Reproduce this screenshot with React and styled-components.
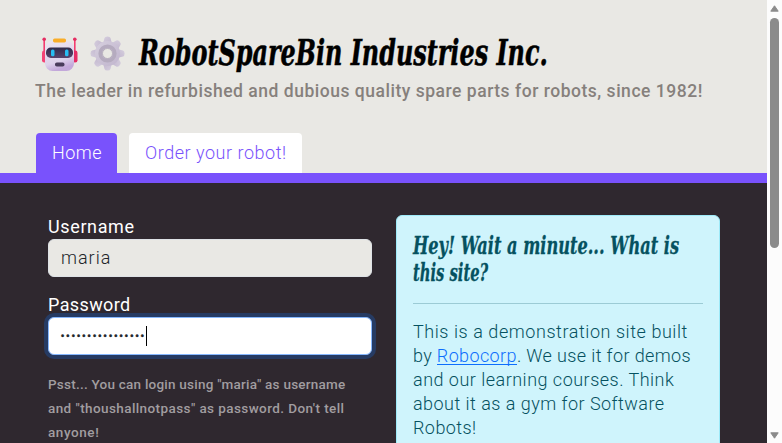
import React, { useLayoutEffect, useRef, useState } from 'react';
import styled, { createGlobalStyle } from 'styled-components';

const Global = createGlobalStyle`
  * { box-sizing: border-box; }
  html, body { margin: 0; height: 100%; overflow: hidden; }
  body { font-family: Roboto, "Liberation Sans", sans-serif; font-size: 18px; font-weight: 350; line-height: 24px; color: #fff; }
`;

const Window = styled.div`
  display: grid;
  grid-template-columns: minmax(0, 1fr) 15px;
  width: 782px;
  height: 443px;
  overflow: hidden;
`;
const Page = styled.div`
  display: flex;
  flex-direction: column;
  height: 443px;
  overflow: hidden;
  background: #2f282f;
`;
const Header = styled.header`
  display: flex;
  flex-direction: column;
  height: 183px;
  flex: none;
  padding: 32px 35px 0;
  background: #e9e8e4;
  border-bottom: 10px solid #7952fc;
`;
const Brand = styled.h1`
  display: flex;
  align-items: center;
  height: 42px;
  margin: 0;
  padding-left: 7px;
  font: italic bold 35px/42px "DejaVu Serif", "Liberation Serif", serif;
  font-stretch: condensed;
  color: #000;
  -webkit-text-stroke: 0.5px #000;
`;
const Emoji = styled.svg`
  flex: none;
  width: 36px;
  height: 36px;
  margin: 2px ${(p) => p.$gap}px 0 0;
`;
const Tagline = styled.p`
  height: 24px;
  margin: 5px 0 0;
  font-size: 17.5px;
  font-weight: 500;
  color: #86807c;
`;
const Nav = styled.nav`
  display: flex;
  gap: 12px;
  margin: auto 0 0 1px;
`;
const Tab = styled.a`
  width: ${(p) => p.$width}px;
  height: 40px;
  padding: 8px 16px;
  border-radius: 4px 4px 0 0;
  background: ${(p) => (p.$active ? '#7952fc' : '#fff')};
  color: ${(p) => (p.$active ? '#fff' : '#7952fc')};
`;
const Main = styled.main`
  display: grid;
  grid-template-columns: 324px 324px;
  gap: 24px;
  padding: 32px 0 0 48px;
`;
const Form = styled.form`
  display: flex;
  flex-direction: column;
`;
const Label = styled.label`
  height: 24px;
  font-weight: 400;
`;
const Field = styled.div`
  display: flex;
  align-items: center;
  height: 38px;
  padding: 0 12px;
  margin-bottom: 16px;
  border: 1px solid ${(p) => (p.$focused ? '#86b7fe' : '#dee2e6')};
  border-radius: 6px;
  background: ${(p) => (p.$focused ? '#fff' : '#e9e8e4')};
  box-shadow: ${(p) => (p.$focused ? '0 0 0 4px #263b63' : 'none')};
  color: #212529;
`;
const Dots = styled.span`
  display: flex;
  font: 9px/20px "Liberation Sans", sans-serif;
  letter-spacing: 2.17px;
  -webkit-text-stroke: 0.4px #212529;
`;
const Caret = styled.i`
  width: 1px;
  height: 20px;
  background: #000;
`;
const Hint = styled.small`
  margin-top: 1px;
  font-size: 13.5px;
  font-weight: 500;
  color: #a19da0;
`;
const Card = styled.aside`
  height: 300px;
  padding: 16px;
  border: 1px solid #9eeaf9;
  border-radius: 6px;
  background: #cff4fc;
  color: #055160;
`;
const CardTitle = styled.h2`
  margin: 0;
  font: italic bold 24px/27px "DejaVu Serif", "Liberation Serif", serif;
  font-stretch: condensed;
  -webkit-text-stroke: 0.3px #055160;
`;
const Rule = styled.hr`
  height: 1px;
  margin: 17px 0 16px;
  border: 0;
  background: #9ccbd5;
`;
const Copy = styled.p`
  margin: 0;
`;
const Link = styled.a`
  height: 21px;
  border-bottom: 1px solid #0d6efd;
  color: #0d6efd;
`;
const Line = styled.div`
  display: flex;
  white-space: nowrap;
`;
const Measure = styled.span`
  display: inline-block;
  white-space: pre;
  transform-origin: 0 50%;
`;
const Scrollbar = styled.div`
  display: flex;
  flex-direction: column;
  align-items: center;
  padding: 5px 0 4px;
  background: #fcfcfc;
`;
const Arrow = styled.svg`
  width: 9px;
  height: 7px;
  flex: none;
`;
const Thumb = styled.div`
  width: 9px;
  height: 230px;
  margin: 6px 0 auto;
  border-radius: 5px;
  background: #8b8b8b;
`;

/* Text set to a given measure, by tracking or by condensing its glyphs. */
function Fit({ width, condense, children }) {
  const ref = useRef(null);
  const [style, setStyle] = useState({});
  useLayoutEffect(() => {
    const natural = ref.current.offsetWidth;
    setStyle(
      condense
        ? { transform: `scaleX(${width / natural})`, marginRight: width - natural }
        : { letterSpacing: `${(width - natural) / children.length}px` }
    );
  }, [width, condense, children]);
  return <Measure ref={ref} style={style}>{children}</Measure>;
}

function Robot() {
  return (
    <Emoji viewBox="0 0 36 36" $gap={12}>
      <defs>
        <linearGradient id="face" x2="0.3" y2="1">
          <stop stopColor="#eee6f3" /><stop offset=".75" stopColor="#ddd1ea" /><stop offset="1" stopColor="#c3a8da" />
        </linearGradient>
        <linearGradient id="visor" x2="0" y2="1">
          <stop stopColor="#302b4b" /><stop offset="1" stopColor="#58436c" />
        </linearGradient>
      </defs>
      <path d="M2.2 4V17M32.8 4V17" stroke="#f33c70" strokeWidth="1.6" />
      <circle cx="2.2" cy="3.2" r="1.8" fill="#e52d62" /><circle cx="32.8" cy="3.2" r="1.8" fill="#e52d62" />
      <rect x="0" y="14.5" width="5" height="12" rx="2.3" fill="#f34476" />
      <rect x="30.5" y="14.5" width="5" height="12" rx="2.3" fill="#e42c65" />
      <rect x="3" y="5" width="29" height="30" rx="7.5" fill="url(#face)" />
      <rect x="11" y="2.6" width="13" height="3.8" rx="1.6" fill="#f9ad28" />
      <rect x="4" y="11.5" width="27" height="10.5" rx="4.8" fill="url(#visor)" />
      <rect x="9" y="13.4" width="3.5" height="6.8" rx="1.5" fill="#27bdf2" />
      <rect x="23" y="13.4" width="3.5" height="6.8" rx="1.5" fill="#27bdf2" />
      <rect x="13" y="26.5" width="9.5" height="4" rx="1.8" fill="#493b5b" />
    </Emoji>
  );
}

function Gear() {
  return (
    <Emoji viewBox="0 0 36 36" $gap={13}>
      <defs>
        <linearGradient id="metal" x2="1" y2="1">
          <stop stopColor="#d6cfde" /><stop offset="1" stopColor="#c0b4cd" />
        </linearGradient>
      </defs>
      <g fill="url(#metal)">
        {[0, 45, 90, 135, 180, 225, 270, 315].map((a) => (
          <path key={a} transform={`rotate(${a} 17.5 17.5)`} d="M14.5 2Q15 .5 17.5 .5T20.5 2L22.3 9H12.7Z" />
        ))}
        <circle cx="17.5" cy="17.5" r="12.5" />
      </g>
      <circle cx="17.5" cy="17.5" r="7.3" fill="none" stroke="#b5abbf" strokeWidth="3.6" />
      <circle cx="17.5" cy="17.5" r="5" fill="#e9e8e4" stroke="#aaa2b0" strokeWidth=".7" />
    </Emoji>
  );
}

export default function App() {
  return (
    <>
      <Global />
      <Window>
        <Page>
          <Header>
            <Brand>
              <Robot /><Gear />
              <Fit width={409} condense>RobotSpareBin Industries Inc.</Fit>
            </Brand>
            <Tagline><Fit width={668}>The leader in refurbished and dubious quality spare parts for robots, since 1982!</Fit></Tagline>
            <Nav>
              <Tab $active $width={81}><Fit width={50}>Home</Fit></Tab>
              <Tab $width={173}><Fit width={142}>Order your robot!</Fit></Tab>
            </Nav>
          </Header>
          <Main>
            <Form>
              <Label><Fit width={87}>Username</Fit></Label>
              <Field><Fit width={50}>maria</Fit></Field>
              <Label><Fit width={83}>Password</Fit></Label>
              <Field $focused><Dots>{'•'.repeat(16)}</Dots><Caret /></Field>
              <Hint>
                <Line><Fit width={298}>Psst... You can login using "maria" as username</Fit></Line>
                <Line><Fit width={296}>and "thoushallnotpass" as password. Don't tell</Fit></Line>
                <Line><Fit width={51}>anyone!</Fit></Line>
              </Hint>
            </Form>
            <Card>
              <CardTitle>
                <Line><Fit width={266} condense>Hey! Wait a minute... What is</Fit></Line>
                <Line><Fit width={75} condense>this site?</Fit></Line>
              </CardTitle>
              <Rule />
              <Copy>
                <Line><Fit width={275}>This is a demonstration site built</Fit></Line>
                <Line><Fit width={24}>by </Fit><Link><Fit width={80}>Robocorp</Fit></Link><Fit width={174}>. We use it for demos</Fit></Line>
                <Line><Fit width={261}>and our learning courses. Think</Fit></Line>
                <Line><Fit width={252}>about it as a gym for Software</Fit></Line>
                <Line><Fit width={64}>Robots!</Fit></Line>
              </Copy>
            </Card>
          </Main>
        </Page>
        <Scrollbar>
          <Arrow viewBox="0 0 9 7"><path d="M4.5 .8 8.2 6.2H.8Z" fill="#8b8b8b" stroke="#8b8b8b" strokeLinejoin="round" /></Arrow>
          <Thumb />
          <Arrow viewBox="0 0 9 7"><path d="M4.5 6.2 8.2 .8H.8Z" fill="#8b8b8b" stroke="#8b8b8b" strokeLinejoin="round" /></Arrow>
        </Scrollbar>
      </Window>
    </>
  );
}
